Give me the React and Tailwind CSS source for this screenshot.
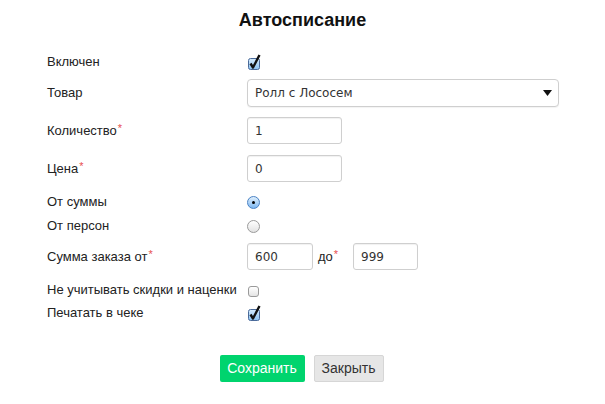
import React from "react";

const font = { fontFamily: '"Liberation Sans", Arial, sans-serif' };

function Req() {
  return <span className="text-[#e8504f] text-[11px] relative -top-[3px] ml-px leading-none">*</span>;
}

function Checked() {
  return (
    <svg width="14" height="16" viewBox="0 0 14 16" className="ml-px">
      <defs>
        <linearGradient id="cbg" x1="0" y1="0" x2="0" y2="1">
          <stop offset="0" stopColor="#d6ebfc" />
          <stop offset="1" stopColor="#8cc2f2" />
        </linearGradient>
      </defs>
      <rect x="0.5" y="4.5" width="11" height="11" rx="2" fill="url(#cbg)" stroke="#4a6a9a" />
      <path d="M2.5 9.5 L5 13.5 L11.5 1" fill="none" stroke="#111" strokeWidth="2.4" strokeLinejoin="round" />
    </svg>
  );
}

function Unchecked() {
  return (
    <span className="ml-px mt-[2px] inline-block w-[11px] h-[11px] rounded-[3px] border border-[#9a9a9a] bg-gradient-to-b from-white to-[#e4e4e4]" />
  );
}

function Radio({ on }) {
  return on ? (
    <span className="inline-flex items-center justify-center w-[13px] h-[13px] rounded-full border border-[#4a82c4] bg-gradient-to-b from-[#e0f0fd] to-[#7db7f0]">
      <span className="w-[3px] h-[3px] rounded-full bg-black" />
    </span>
  ) : (
    <span className="inline-block w-[13px] h-[13px] rounded-full border border-[#9a9a9a] bg-gradient-to-b from-white to-[#e2e2e2]" />
  );
}

function Field({ value, w }) {
  return (
    <div
      className={`${w} h-[27px] border border-[#cfcfcf] rounded-[3px] bg-white flex items-center pl-[7px] text-[12px] text-[#333] shadow-[inset_0_1px_1px_rgba(0,0,0,0.06)]`}
      style={{ fontFamily: '"DejaVu Sans", sans-serif' }}
    >
      {value}
    </div>
  );
}

function Row({ label, h, mt, children }) {
  return (
    <div className={`flex items-center ${h} ${mt}`}>
      <div className="w-[200px] shrink-0 text-[13px] text-[#222]">{label}</div>
      {children}
    </div>
  );
}

export default function App() {
  return (
    <div className="w-[605px] h-[404px] bg-white" style={font}>
      <h1 className="pt-2 h-[32px] leading-[24px] text-center text-[18px] font-bold text-[#111]">Автосписание</h1>
      <div className="pl-[47px]">
        <Row label="Включен" h="h-[24px]" mt="mt-[18px]">
          <Checked />
        </Row>
        <Row label="Товар" h="h-[28px]" mt="mt-[5px]">
          <div
            className="w-[312px] h-[28px] border border-[#cfcfcf] rounded-[4px] bg-white flex items-center justify-between pl-[7px] pr-[6px] text-[12px] text-[#333] shadow-[0_1px_1px_rgba(0,0,0,0.05)]"
            style={{ fontFamily: '"DejaVu Sans", sans-serif' }}
          >
            <span>Ролл с Лососем</span>
            <svg width="9" height="6" viewBox="0 0 9 6">
              <path d="M0 0 H9 L4.5 6 Z" fill="#111" />
            </svg>
          </div>
        </Row>
        <Row label={<>Количество<Req /></>} h="h-[27px]" mt="mt-[10px]">
          <Field value="1" w="w-[95px]" />
        </Row>
        <Row label={<>Цена<Req /></>} h="h-[27px]" mt="mt-[11px]">
          <Field value="0" w="w-[95px]" />
        </Row>
        <Row label="От суммы" h="h-[24px]" mt="mt-[8px]">
          <Radio on />
        </Row>
        <Row label="От персон" h="h-[24px]" mt="mt-0">
          <Radio />
        </Row>
        <Row label={<>Сумма заказа от<Req /></>} h="h-[27px]" mt="mt-[5px]">
          <Field value="600" w="w-[66px]" />
          <span className="w-[40px] pl-[5px] text-[13px] text-[#222]">
            до<Req />
          </span>
          <Field value="999" w="w-[65px]" />
        </Row>
        <Row label="Не учитывать скидки и наценки" h="h-[22px]" mt="mt-[9px]">
          <Unchecked />
        </Row>
        <Row label="Печатать в чеке" h="h-[22px]" mt="mt-px">
          <Checked />
        </Row>
      </div>
      <div className="flex justify-center gap-[9px] mt-[31px] pr-[2px]">
        <button className="h-[27px] w-[85px] rounded-[2px] bg-[#00d46e] text-white text-[14px]">Сохранить</button>
        <button className="h-[27px] w-[70px] rounded-[2px] bg-[#e6e6e6] border border-[#d6d6d6] text-[#333] text-[14px]">Закрыть</button>
      </div>
    </div>
  );
}
